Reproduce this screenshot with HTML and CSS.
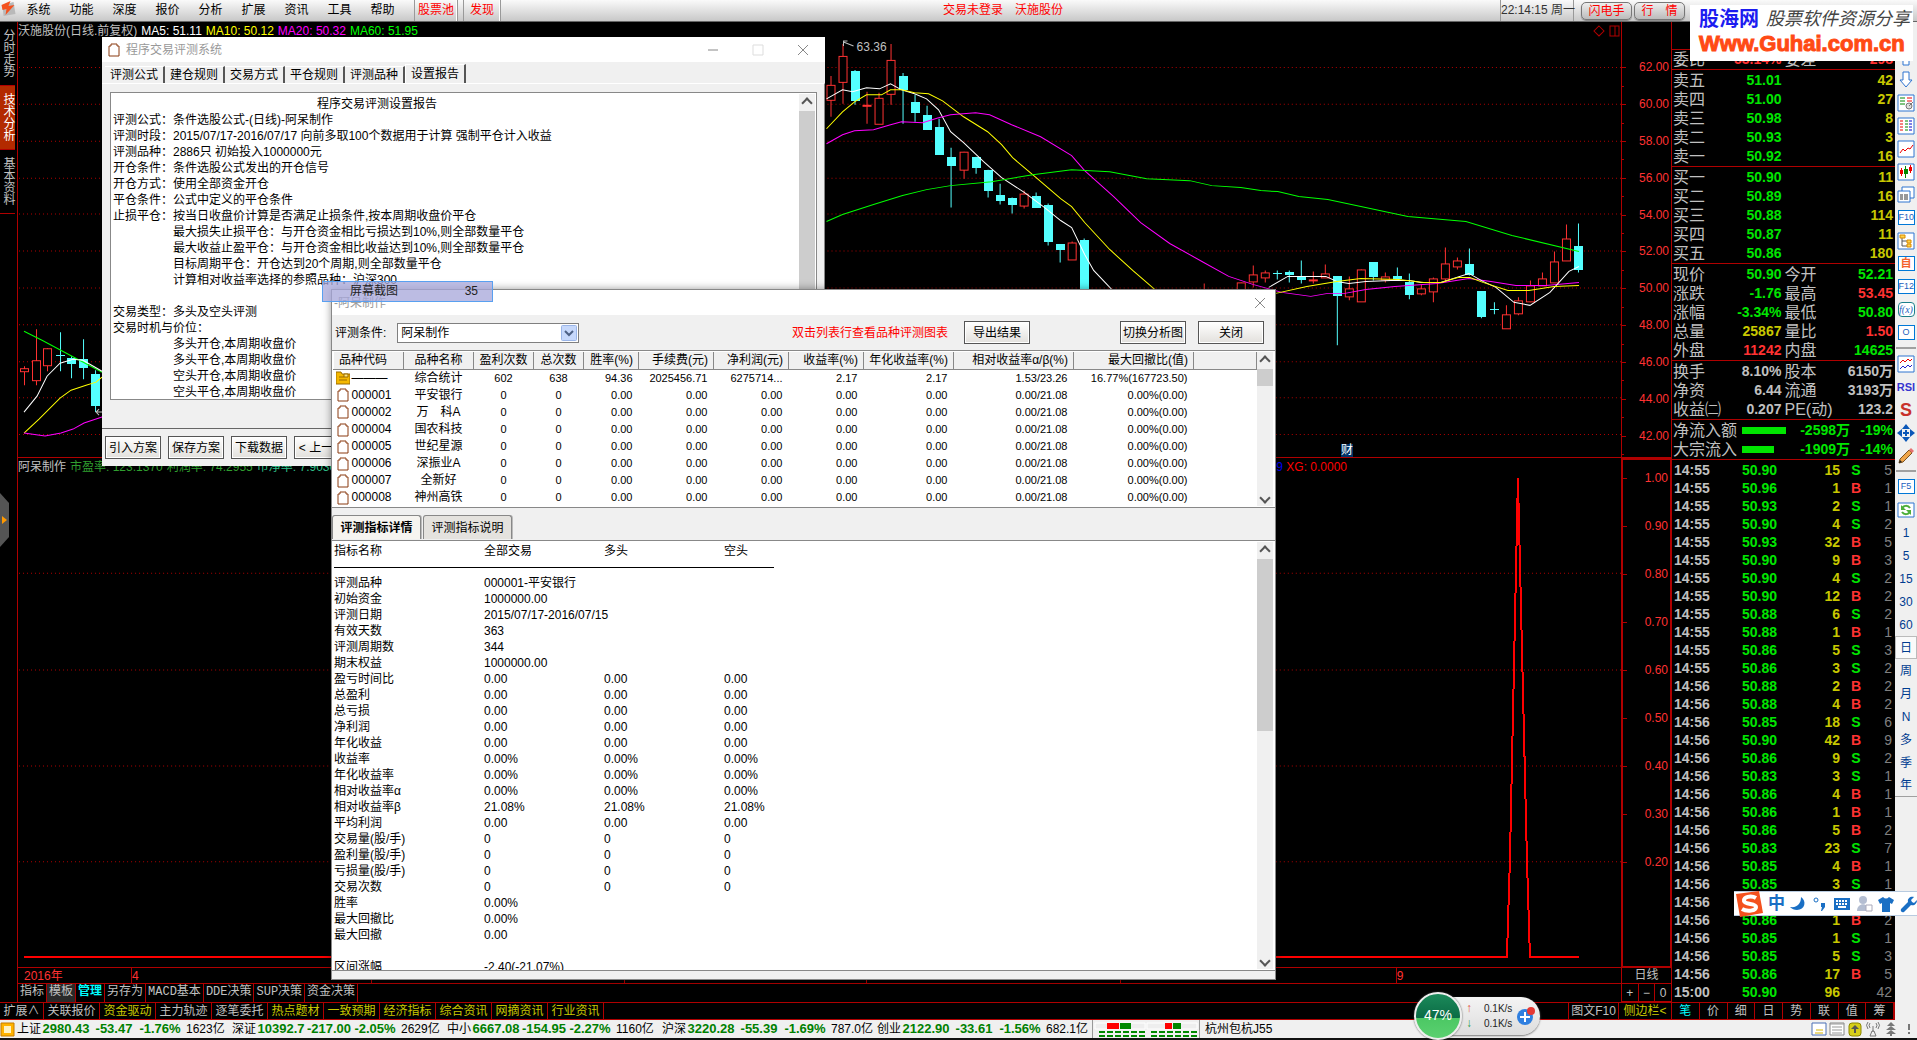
FILE: index.html
```html
<!DOCTYPE html>
<html lang="zh-CN">
<head>
    <meta charset="UTF-8">
    <meta name="viewport" content="width=device-width, initial-scale=1.0">
    <title>程序交易评测系统</title>
    <link rel="stylesheet" href="styles.css">
</head>
<body>
    <header class="menubar">
        <svg class="app-icon" viewBox="0 0 16 18"><path d="M2 5l11-3 2 12-12 2z" fill="#b9b9b9"/><path d="M1 5l9-4-2 5 6-1-9 10 1-6-4 1z" fill="#f4511e"/></svg>
        <nav class="menu">
            <a href="#">系统</a><a href="#">功能</a><a href="#">深度</a><a href="#">报价</a><a href="#">分析</a><a href="#">扩展</a><a href="#">资讯</a><a href="#">工具</a><a href="#">帮助</a>
        </nav>
        <a class="menu-hot" href="#">股票池</a>
        <a class="menu-hot" href="#">发现</a>
        <div class="login-state"><span>交易未登录</span><span>沃施股份</span></div>
        <div class="clock">22:14:15 周一</div>
        <button class="pill-btn">闪电手</button>
        <button class="pill-btn">行　情</button>
    </header>

    <main class="workspace">
        <div class="left">
            <div class="stage">
                <nav class="side-tabs">
                    <a href="#">分时走势</a>
                    <a href="#" class="active">技术分析</a>
                    <a href="#">基本资料</a>
                </nav>
                <div class="charts">
                    <section class="pane">
                        <div class="pane-title">
                            <span>沃施股份(日线.前复权)</span><span class="c-white">MA5: 51.11</span><span class="c-ma10">MA10: 50.12</span><span class="c-ma20">MA20: 50.32</span><span class="c-ma60">MA60: 51.95</span>
                        </div>
                        <svg class="plot" viewBox="18 22 1602 436" preserveAspectRatio="none">
                            <g id="gridTop" class="grid-line"></g>
                            <g id="candles"></g>
                            <g class="ma">
                                <polyline class="s-ma60" points="24,332 42,341 102,373"/>
                                <polyline class="s-ma5" points="24,413 37,397 47,377 60,364 73,360 83,361 102,372"/>
                                <polyline class="s-ma10" points="24,434 39,420 60,399 71,391 86,386 96,383 102,378"/>
                                <polyline class="s-ma20" points="24,434 45,437 61,434 73,430 84,424 102,418"/>
                                <polyline class="s-ma5" points="826,99 842,90 852,92 866,88 879,89 890,84 901,90 914,94 926,99 938,110 950,132 963,143 983,162 1001,178 1024,193 1044,208 1060,221 1071,228 1084,255 1093,271 1111,290"/>
                                <polyline class="s-ma10" points="826,129 842,112 854,102 866,95 881,95 890,90 901,90 914,93 928,94 942,101 963,117 987,132 1001,145 1012,158 1032,175 1060,199 1071,207 1084,223 1109,250 1132,271 1154,290"/>
                                <polyline class="s-ma20" points="826,144 842,135 854,131 873,130 890,125 901,122 922,123 938,118 950,115 975,113 989,115 1011,125 1040,137 1071,156 1084,171 1113,197 1140,223 1169,244 1203,263 1228,277 1252,285 1281,293 1310,297 1327,294 1344,294 1365,290 1394,287 1436,284 1468,279 1490,282 1515,286 1545,286 1578,283"/>
                                <polyline class="s-ma60" points="826,222 842,215 873,205 902,196 926,190 950,186 991,182 1032,175 1071,170 1109,172 1146,179 1189,181 1211,186 1240,188 1260,191 1277,192 1298,197 1327,200 1360,207 1407,217 1465,222 1511,236 1578,252"/>
                                <polyline class="s-ma5" points="1268,288 1287,277 1325,277 1336,282 1348,284 1365,282 1390,281 1409,281 1420,283 1440,283 1468,274 1482,282 1495,288 1513,303 1529,306 1549,293 1568,272 1578,267"/>
                                <polyline class="s-ma10" points="1275,294 1306,287 1336,282 1360,279 1398,280 1423,283 1440,283 1457,278 1469,278 1482,283 1507,291 1528,291 1553,287 1578,286"/>
                            </g>
                            <path class="mark" d="M853,46 L843,42 M847,41 h-4 v5 M102,413 h-5 M99,410 l-3,3 3,3"/>
                            <path class="mark-red" d="M1598,26 l5,5 -5,5 -5,-5z M1609,26 h9 v10 h-9z M1614,26 v10"/>
                        </svg>
                        <span class="peak">63.36</span>
                        <span class="news">财</span>
                    </section>
                    <div class="axis axis-top">
                        <span>62.00</span><span>60.00</span><span>58.00</span><span>56.00</span><span>54.00</span><span>52.00</span><span>50.00</span><span>48.00</span><span>46.00</span><span>44.00</span><span>42.00</span>
                    </div>
                    <section class="pane pane-lower">
                        <div class="pane-title">
                            <span>阿呆制作</span><span class="c-pe">市盈率: 123.1370</span><span class="c-pe">利润率: 74.2955</span><span class="c-pb">市净率: 7.9030</span><span class="xg"><b>9</b> XG: 0.0000</span>
                        </div>
                        <svg class="plot" viewBox="18 458 1602 510" preserveAspectRatio="none">
                            <g id="gridLow" class="grid-line"></g>
                            <polyline class="signal" points="24,958 1506,958 1509,860 1517,478 1526,860 1529,958 1578,958"/>
                        </svg>
                    </section>
                    <div class="axis axis-low">
                        <span>1.00</span><span>0.90</span><span>0.80</span><span>0.70</span><span>0.60</span><span>0.50</span><span>0.40</span><span>0.30</span><span>0.20</span>
                    </div>
                    <div class="months">
                        <span>2016年</span><span>4</span><span>5</span><span>6</span><span>7</span><span>8</span><span>9</span>
                    </div>
                    <div class="period">日线</div>
                    <nav class="indicator-tabs">
                        <a href="#">指标</a><a href="#" class="pressed">模板</a><a href="#" class="active">管理</a><a href="#">另存为</a><a href="#">MACD基本</a><a href="#">DDE决策</a><a href="#">SUP决策</a><a href="#">资金决策</a>
                    </nav>
                    <div class="zoom-keys"><button>+</button><button>−</button><button>0</button></div>
                </div>
            </div>
            <nav class="ext-tabs">
                <a href="#" class="first">扩展∧</a><a href="#">关联报价</a><a href="#" class="y">资金驱动</a><a href="#">主力轨迹</a><a href="#">逐笔委托</a><a href="#" class="y">热点题材</a><a href="#" class="y">一致预期</a><a href="#" class="y">经济指标</a><a href="#" class="y">综合资讯</a><a href="#" class="y">网摘资讯</a><a href="#" class="y">行业资讯</a>
                <a href="#" class="f10">图文F10</a><a href="#" class="y fold">侧边栏&lt;</a>
            </nav>
        </div>

        <aside class="quote">
            <div class="quote-head"></div>
            <div id="quote"></div>
            <table class="ticks"><tbody id="ticks"></tbody></table>
            <nav class="quote-tabs">
                <a href="#" class="active">笔</a><a href="#">价</a><a href="#">细</a><a href="#">日</a><a href="#">势</a><a href="#">联</a><a href="#">值</a><a href="#">筹</a>
            </nav>
        </aside>

        <nav class="tools">
            <button aria-label="上"><svg viewBox="0 0 18 18"><path d="M9 2l6 7h-3v8H6V9H3z" fill="#fff" stroke="#2f74d0"/></svg></button>
            <button aria-label="下"><svg viewBox="0 0 18 18"><path d="M6 1h6v8h3l-6 7-6-7h3z" fill="#fff" stroke="#2f74d0"/></svg></button>
            <button aria-label="报价设置"><svg viewBox="0 0 18 18"><path class="frame" d="M1 1h16v16H1z"/><path d="M3 4h5M3 7h5M3 10h5" stroke="#080"/><path d="M10 4h5M10 7h5" stroke="#e00"/><circle cx="12" cy="12" r="3" fill="#ddd" stroke="#777"/><path d="M12 12l4-4" stroke="#777"/></svg></button>
            <button aria-label="报价列表"><svg viewBox="0 0 18 18"><path class="frame" d="M1 1h16v16H1z"/><path d="M3 4h3M3 7h3M3 10h3M3 13h3" stroke="#e00"/><path d="M8 4h3M8 7h3M8 10h3M8 13h3" stroke="#080"/><path d="M12 4h3M12 7h3M12 10h3M12 13h3" stroke="#00c"/></svg></button>
            <button aria-label="分时图"><svg viewBox="0 0 18 18"><path class="frame" d="M1 1h16v16H1z"/><path d="M3 13l3-4 2 2 3-3 2 1 3-4" fill="none" stroke="#e00"/></svg></button>
            <button aria-label="K线图"><svg viewBox="0 0 18 18"><path class="frame" d="M1 1h16v16H1z"/><path d="M3 7h3v4H3zM12 4h3v4h-3zM4 5h1v8H4zM13 2h1v8h-1z" fill="#e00"/><path d="M7 6h4v5H7zM8 3h1v12H8z" fill="#080"/></svg></button>
            <button aria-label="多窗口"><svg viewBox="0 0 18 18"><path class="frame" d="M5 1h12v11H5z"/><path class="frame" d="M1 5h12v11H1z"/><path d="M3 9h3M7 9h4M3 11h3M7 11h4M3 13h3M7 13h4" stroke="#333"/></svg></button>
            <button><span class="boxed">F10</span></button>
            <button aria-label="板块树"><svg viewBox="0 0 18 18"><path class="frame" d="M1 1h16v16H1z"/><path d="M5 6v8h5M5 9h5" fill="none" stroke="#555"/><path d="M3 3h5v3H3zM10 8h4v3h-4zM10 12h4v3h-4z" fill="#ffd54a" stroke="#d98a00"/></svg></button>
            <button><span class="boxed boxed-own">自</span></button>
            <button><span class="boxed">F12</span></button>
            <button><span class="boxed boxed-fx">f(x)</span></button>
            <button><span class="boxed">O</span></button>
            <hr>
            <button aria-label="叠加"><svg viewBox="0 0 18 18"><path class="frame" d="M1 1h16v16H1z"/><path d="M3 8l3-3 2 2 3-3 2 2 2-2" fill="none" stroke="#e00"/><path d="M3 14l3-3 2 2 3-3 2 2 2-2" fill="none" stroke="#22c"/></svg></button>
            <button class="rsi">RSI</button>
            <button class="money">S</button>
            <button aria-label="移动"><svg viewBox="0 0 18 18"><path d="M9 0l4 5H5zM9 18l4-5H5zM0 9l5-4v8zM18 9l-5-4v8zM8 6h2v6H8zM6 8h6v2H6z" fill="#0b57b8"/></svg></button>
            <button aria-label="画线"><svg viewBox="0 0 18 18"><path d="M2 16l1-4L12 3l3 3-9 9z" fill="#f0a64a" stroke="#7a5220"/><path d="M12 3l2-2 3 3-2 2z" fill="#e57373"/><path d="M2 16l1-3 2 2z" fill="#222"/></svg></button>
            <hr>
            <button><span class="boxed">F5</span></button>
            <button aria-label="刷新"><svg viewBox="0 0 18 18"><path class="frame" d="M1 2h16v14H1z"/><path d="M5 8c1-4 6-4 8-1M13 10c-1 4-6 4-8 1" fill="none" stroke="#4cae3a" stroke-width="2"/><path d="M4 4v5h5zM14 14V9H9z" fill="#4cae3a"/></svg></button>
            <button>1</button><button>5</button><button>15</button><button>30</button><button>60</button>
            <button class="on">日</button><button>周</button><button>月</button><button>N</button><button>多</button><button>季</button><button class="last">年</button>
        </nav>
    </main>

    <footer class="status">
        <svg class="home" viewBox="0 0 15 15"><path d="M1 1h13v13H1z" fill="#ffb300" stroke="#c67c00"/><path d="M4 4h7v7H4z" fill="#fff3c4"/></svg>
        <div id="indices" class="indices"></div>
        <svg class="meter" viewBox="0 0 106 18">
            <path d="M2 3h50v6H2zM54 3h50v6H54z" fill="#eee" stroke="#fff"/>
            <path d="M14 3h12v6H14zM72 3h7v6h-7z" fill="#f00"/><path d="M27 3h11v6H27zM80 3h8v6h-8z" fill="#080"/>
            <path d="M6 12h46M6 16h46M58 12h46M58 16h46" stroke="#080" stroke-width="2" stroke-dasharray="6 2"/>
        </svg>
        <span class="server">杭州包杭J55</span>
        <div class="tray">
            <svg viewBox="0 0 16 16"><path d="M1 2h14v12H1z" fill="#fff" stroke="#4a6fb5"/><path d="M5 9h7M4 12h8" stroke="#d8b400"/></svg>
            <svg viewBox="0 0 16 16"><path d="M1 2h14v12H1z" fill="#fff" stroke="#888"/><path d="M1 3h14M3 6h10M3 9h10M3 12h10" stroke="#999"/></svg>
            <svg viewBox="0 0 16 16"><rect x="2" y="2" width="12" height="13" rx="3" fill="#d7cf1a" stroke="#8c8700"/><path d="M8 4l4 4H9v4H7V8H4z" fill="#555"/></svg>
            <svg viewBox="0 0 16 16"><path d="M8 5v6M5 15l2-5h2l2 5zM5 2q-2 2 0 5M11 2q2 2 0 5M3 1q-3 3 0 7M13 1q3 3 0 7" fill="none" stroke="#777"/></svg>
            <svg viewBox="0 0 16 16"><path d="M8 1l4 4H4zM8 5l5 4H3zM8 9l5 4H3zM7 12h2v3H7z" fill="#777"/></svg>
            <svg viewBox="0 0 16 16"><path d="M7 3h2v6H7zM7 11h2v2H7z" fill="#777"/></svg>
        </div>
    </footer>

    <svg class="side-handle" viewBox="0 0 10 54"><path d="M0 0l9 10v34L0 54z" fill="#555"/><path d="M2 23l5 4-5 4z" fill="#f90"/></svg>

    <section class="window win-setup">
        <header class="titlebar">
            <svg class="clip" viewBox="0 0 14 14"><path d="M2 3h2V1h6v2h2v10H2z" fill="#fff" stroke="#8a3a10"/></svg>
            <h1>程序交易评测系统</h1>
            <button class="sys" aria-label="最小化"><svg viewBox="0 0 12 12"><path d="M1 6h10"/></svg></button>
            <button class="sys sys-off" aria-label="最大化" disabled><svg viewBox="0 0 12 12"><path d="M1 1h10v10H1z"/></svg></button>
            <button class="sys" aria-label="关闭"><svg viewBox="0 0 12 12"><path d="M1 1l10 10M11 1L1 11"/></svg></button>
        </header>
        <div class="setup-tabs">
            <button>评测公式</button><button>建仓规则</button><button>交易方式</button><button>平仓规则</button><button>评测品种</button><button class="active">设置报告</button>
        </div>
        <div class="setup-page">
            <div class="report">
                <div class="report-text">
                    <h2>程序交易评测设置报告</h2>
                    <p>评测公式：条件选股公式-(日线)-阿呆制作</p>
                    <p>评测时段：2015/07/17-2016/07/17 向前多取100个数据用于计算 强制平仓计入收益</p>
                    <p>评测品种：2886只 初始投入1000000元</p>
                    <p>开仓条件：条件选股公式发出的开仓信号</p>
                    <p>开仓方式：使用全部资金开仓</p>
                    <p>平仓条件：公式中定义的平仓条件</p>
                    <p>止损平仓：按当日收盘价计算是否满足止损条件,按本周期收盘价平仓</p>
                    <p class="in">最大损失止损平仓：与开仓资金相比亏损达到10%,则全部数量平仓</p>
                    <p class="in">最大收益止盈平仓：与开仓资金相比收益达到10%,则全部数量平仓</p>
                    <p class="in">目标周期平仓：开仓达到20个周期,则全部数量平仓</p>
                    <p class="in">计算相对收益率选择的参照品种：沪深300</p>
                    <p>&nbsp;</p>
                    <p>交易类型：多头及空头评测</p>
                    <p>交易时机与价位：</p>
                    <p class="in">多头开仓,本周期收盘价</p>
                    <p class="in">多头平仓,本周期收盘价</p>
                    <p class="in">空头开仓,本周期收盘价</p>
                    <p class="in">空头平仓,本周期收盘价</p>
                </div>
                <div class="scroll"><i class="up"></i><b class="thumb"></b></div>
            </div>
        </div>
        <div class="setup-actions">
            <button class="btn">引入方案</button><button class="btn">保存方案</button><button class="btn">下载数据</button><button class="btn">&lt; 上一步</button>
        </div>
    </section>

    <section class="window win-result">
        <header class="titlebar">
            <h1>-阿呆制作</h1>
            <button class="sys" aria-label="关闭"><svg viewBox="0 0 12 12"><path d="M1 1l10 10M11 1L1 11"/></svg></button>
        </header>
        <div class="result-bar">
            <label for="cond">评测条件:</label>
            <select id="cond"><option>阿呆制作</option></select>
            <span class="hint">双击列表行查看品种评测图表</span>
            <button class="btn">导出结果</button>
            <button class="btn btn-switch">切换分析图</button>
            <button class="btn">关闭</button>
        </div>
        <div class="list">
            <table class="list-table">
                <colgroup><col class="w70"><col class="w70"><col class="w60"><col class="w50"><col class="w55"><col class="w75"><col class="w75"><col class="w75"><col class="w90"><col class="w120"><col class="w120"><col></colgroup>
                <thead>
                    <tr><th>品种代码</th><th>品种名称</th><th>盈利次数</th><th>总次数</th><th>胜率(%)</th><th>手续费(元)</th><th>净利润(元)</th><th>收益率(%)</th><th>年化收益率(%)</th><th>相对收益率α/β(%)</th><th>最大回撤比(值)</th><th></th></tr>
                </thead>
                <tbody id="stocks"></tbody>
            </table>
            <div class="scroll"><i class="up"></i><b class="thumb"></b><i class="down"></i></div>
        </div>
        <div class="detail-tabs"><button class="active">评测指标详情</button><button>评测指标说明</button></div>
        <div class="detail">
            <table class="detail-table">
                <colgroup><col class="w150"><col class="w120"><col class="w120"><col></colgroup>
                <thead>
                    <tr><th>指标名称</th><th>全部交易</th><th>多头</th><th>空头</th></tr>
                    <tr><td colspan="4"><hr></td></tr>
                </thead>
                <tbody id="metrics"></tbody>
            </table>
            <div class="scroll"><i class="up"></i><b class="thumb"></b><i class="down"></i></div>
        </div>
    </section>

    <div class="drag-tip"><span>屏幕截图</span><span>35</span></div>

    <div class="brand">
        <div class="brand-row"><strong>股海网</strong><em>股票软件资源分享</em></div>
        <div class="brand-url">Www.Guhai.com.cn</div>
    </div>

    <div class="ime">
        <svg class="ime-logo" viewBox="0 0 30 28"><path d="M2 4l23-3 4 22-23 4z" fill="#f4511e"/><path d="M22 8c-5-3-13-1-12 3s12 2 12 6-9 5-14 2" fill="none" stroke="#fff" stroke-width="4"/></svg>
        <b>中</b>
        <svg viewBox="0 0 18 18"><path d="M12 2c6 4 4 13-4 13-3 0-5-1-7-3 8 1 11-4 11-10z"/></svg>
        <svg viewBox="0 0 18 18"><circle cx="5" cy="5" r="2" fill="none" stroke="#1a6fc4"/><path d="M10 8h4v4l-3 4h-1l1-4h-1z"/></svg>
        <svg viewBox="0 0 18 18"><path d="M1 3h16v12H1z"/><path d="M3 6h12M3 9h12" stroke="#fff" stroke-width="2" stroke-dasharray="2 1"/><path d="M5 12h8" stroke="#fff" stroke-width="2"/></svg>
        <svg class="dim" viewBox="0 0 18 18"><circle cx="8" cy="5" r="4"/><path d="M2 16c0-9 12-9 12 0z"/><path d="M11 10h6v6h-6z" fill="#fff" stroke="#aab"/></svg>
        <svg viewBox="0 0 18 18"><path d="M6 2q3 3 6 0l5 3-2 4-2-1v9H5V8L3 9 1 5z"/></svg>
        <svg viewBox="0 0 18 18"><path d="M2 14l7-7c-1-4 3-6 6-5l-3 3 1 2 2 1 3-3c0 4-3 6-6 5l-7 7c-2 1-4-1-3-3z"/></svg>
    </div>

    <div class="netball">
        <div class="ball">47%</div>
        <div class="speeds"><span><i class="rise">↑</i>0.1K/s</span><span><i class="fall">↓</i>0.1K/s</span></div>
        <svg class="plus" viewBox="0 0 22 22"><circle cx="10" cy="12" r="8" fill="#2f7fe0"/><path d="M10 7v10M5 12h10" stroke="#fff" stroke-width="2"/><circle cx="16" cy="6" r="4" fill="#e53935"/></svg>
    </div>

    <script src="script.js"></script>
</body>
</html>
```
FILE: styles.css
```css
* {
    box-sizing: border-box;
}
body {
    margin: 0;
    height: 100vh;
    display: grid;
    grid-template-rows: 22px minmax(0, 1fr) 20px;
    grid-template-columns: minmax(0, 1fr);
    position: relative;
    overflow: hidden;
    background: #000;
    color: #c0c0c0;
    font: 12px/16px "Liberation Sans", "Noto Sans CJK SC", sans-serif;
    white-space: nowrap;
}
a {
    color: inherit;
    text-decoration: none;
}
button, select {
    font: inherit;
    color: inherit;
    margin: 0;
    padding: 0;
}
h1, h2, p {
    margin: 0;
    font-size: 12px;
    font-weight: normal;
}
table {
    border-collapse: collapse;
    border-spacing: 0;
}
td, th {
    padding: 0;
    font-weight: normal;
    text-align: left;
}

/* top menu */
.menubar {
    display: flex;
    align-items: stretch;
    padding-right: 231px;
    background: linear-gradient(#fafafa, #c8c8c8);
    border-bottom: 1px solid #666;
    color: #000;
    line-height: 20px;
}
.app-icon {
    width: 17px;
    height: 18px;
}
.menu {
    display: flex;
    margin-right: 10px;
}
.menu a {
    width: 43px;
    text-align: center;
}
.menu-hot {
    margin-right: 5px;
    padding: 0 3px;
    color: #f00;
    border-left: 1px solid #999;
    border-right: 1px solid #999;
    box-shadow: inset -1px 0 #fff;
}
.menu-hot + .menu-hot {
    padding: 0 6px;
}
.login-state {
    flex: 1;
    display: flex;
    justify-content: center;
    gap: 12px;
    color: #f00;
}
.clock {
    width: 74px;
    margin-right: 6px;
    border-left: 1px solid #999;
    border-right: 1px solid #999;
    text-align: center;
    color: #333;
}
.pill-btn {
    width: 51px;
    height: 18px;
    margin: 2px 1px 0;
    border: 1px solid #777;
    border-radius: 5px;
    background: linear-gradient(#eee, #bbb);
    box-shadow: 0 1px 1px #888;
    color: #f00;
    line-height: 15px;
}

/* main frame */
.workspace {
    display: flex;
    min-height: 0;
}
.left {
    flex: 1;
    min-width: 0;
    display: flex;
    flex-direction: column;
}
.stage {
    flex: 1;
    min-height: 0;
    display: flex;
}
.side-tabs {
    width: 18px;
    border-right: 1px solid #b00000;
}
.side-tabs a {
    display: block;
    height: 64px;
    padding: 7px 0 0;
    border-bottom: 1px solid #b00000;
    writing-mode: vertical-rl;
    line-height: 15px;
}
.side-tabs .active {
    background: #b32a00;
    color: #fff;
}
.charts {
    flex: 1;
    min-width: 0;
    display: grid;
    grid-template-columns: minmax(0, 1fr) 51px;
    grid-template-rows: minmax(0, 436fr) minmax(0, 510fr) 16px 18px;
}
.pane {
    display: grid;
    position: relative;
    border-bottom: 1px solid #b00000;
    min-height: 0;
}
.pane-title, .plot {
    grid-area: 1 / 1;
}
.pane-title {
    display: flex;
    gap: 4px;
    height: 18px;
    line-height: 18px;
}
.plot {
    width: 100%;
    height: 100%;
    min-height: 0;
    shape-rendering: crispEdges;
}
.c-white { color: #fff; }
.c-ma10 { color: #ff0; }
.c-ma20 { color: #f0f; }
.c-ma60 { color: #0f0; }
.c-pe { color: #2f9e2f; }
.c-pb { color: #2fc08a; }
.xg {
    margin-left: auto;
    margin-right: 274px;
    color: #f00;
}
.xg b {
    color: #00f;
    font-weight: normal;
}
.grid-line line {
    stroke: #b00000;
    stroke-dasharray: 1 3;
}
.ma polyline, .signal {
    fill: none;
}
.s-ma5 { stroke: #fff; }
.s-ma10 { stroke: #ff0; }
.s-ma20 { stroke: #f0f; }
.s-ma60 { stroke: #0f0; }
.signal {
    stroke: #f00;
    stroke-width: 2;
}
.mark {
    fill: none;
    stroke: #c0c0c0;
}
.mark-red {
    fill: none;
    stroke: #b00000;
}
.up-bar {
    fill: #000;
    stroke: #ff3232;
}
.up-wick { stroke: #ff3232; }
.down-bar { fill: #54ffff; }
.down-wick { stroke: #54ffff; }
.peak, .news {
    position: absolute;
}
.peak {
    left: 52%;
    top: 17px;
    margin-left: 5px;
}
.news {
    right: 268px;
    bottom: 0;
    line-height: 13px;
    background: #003366;
    color: #fff;
}
.axis {
    display: flex;
    flex-direction: column;
    border: 1px solid #b00000;
    border-top: 0;
    color: #ff3232;
    text-align: right;
}
.axis span {
    position: relative;
    padding-right: 2px;
}
.axis span::before, .axis-top span::after {
    content: "";
    position: absolute;
    left: 0;
    top: 50%;
    width: 4px;
    height: 1px;
    background: #b00000;
}
.axis-top {
    padding: 27px 0 3px;
}
.axis-top span {
    flex: 1;
    display: flex;
    align-items: center;
    justify-content: flex-end;
}
.axis-top span::after {
    top: 100%;
    width: 2px;
}
.axis-low {
    justify-content: space-between;
    padding: 10px 0 96px;
    border: 2px solid #b00000;
}
.months {
    display: grid;
    grid-template-columns: 113fr 240fr 253fr 241fr 254fr 276fr 225fr;
    color: #ff3232;
    line-height: 16px;
    border-bottom: 1px solid #b00000;
}
.months span + span {
    border-left: 1px solid #b00000;
}
.months span:first-child {
    padding-left: 6px;
}
.period, .zoom-keys {
    border: 1px solid #b00000;
    border-top: 0;
    text-align: center;
}
.period {
    line-height: 15px;
}
.indicator-tabs, .ext-tabs {
    display: flex;
    line-height: 17px;
}
.indicator-tabs a, .ext-tabs a {
    padding: 0 3px;
    border-right: 1px solid #b00000;
}
.indicator-tabs a {
    padding: 0 2px;
    font-family: "Liberation Mono", "Noto Sans CJK SC", monospace;
}
.indicator-tabs .pressed {
    background: #2a2a2a;
}
.indicator-tabs .active {
    color: #0ff;
    font-weight: bold;
}
.zoom-keys {
    display: flex;
}
.zoom-keys button {
    flex: 1;
    background: none;
    border: 0;
}
.zoom-keys button + button {
    border-left: 1px solid #b00000;
}
.ext-tabs {
    height: 18px;
    border-top: 1px solid #b00000;
    border-bottom: 1px solid #b00000;
    line-height: 16px;
}
.ext-tabs a {
    width: 56px;
    text-align: center;
}
.ext-tabs .first {
    width: 44px;
}
.ext-tabs .y {
    color: #c8c800;
}
.ext-tabs .f10 {
    width: 51px;
    margin-left: auto;
    padding: 0;
    border-left: 1px solid #b00000;
}
.ext-tabs .fold {
    width: 53px;
    padding: 0;
}

/* quote column */
.quote {
    width: 223px;
    display: flex;
    flex-direction: column;
}
.quote-head {
    height: 28px;
    border-bottom: 1px solid #b00000;
}
.quote-table {
    width: 100%;
    table-layout: fixed;
    border-bottom: 1px solid #b00000;
    margin-bottom: 1px;
}
.quote-table td {
    height: 19px;
    line-height: 19px;
    font-size: 16px;
    padding: 0 2px 0 1px;
}
.quote-table td.num {
    font-size: 14px;
    font-weight: bold;
    text-align: right;
}
.q-label { width: 50px; }
.q-value { width: 61px; }
.q-flow { width: 69px; }
.green { color: #00e600; }
.yellow { color: #c8c800; }
.red { color: #ff3232; }
.grey { color: #808080; }
.flow-bar {
    height: 7px;
    background: #00e600;
}
.ticks {
    width: 100%;
    table-layout: fixed;
}
.ticks td {
    height: 18px;
    line-height: 18px;
    font-size: 14px;
    font-weight: bold;
    text-align: right;
}
.ticks td:nth-child(1) {
    width: 45px;
    padding-left: 2px;
    text-align: left;
}
.ticks td:nth-child(2) { width: 60px; }
.ticks td:nth-child(3) { width: 63px; }
.ticks td:nth-child(4) {
    width: 32px;
    text-align: center;
}
.ticks td:nth-child(5) {
    padding-right: 3px;
    font-weight: normal;
}
.quote-tabs {
    display: flex;
    margin-top: auto;
    height: 18px;
    border: 1px solid #b00000;
    border-left: 0;
    text-align: center;
}
.quote-tabs a {
    flex: 1;
    border-right: 1px solid #b00000;
}
.quote-tabs .active {
    color: #0ff;
}

/* right tool strip */
.tools {
    display: flex;
    flex-direction: column;
    width: 22px;
    padding-top: 23px;
    background: #f0f0f0;
    color: #003c90;
}
.tools button {
    flex: none;
    display: flex;
    align-items: center;
    justify-content: center;
    width: 22px;
    height: 23px;
    border: 0;
    background: none;
}
.tools svg {
    width: 18px;
    height: 18px;
}
.tools .frame {
    fill: #fff;
    stroke: #2f74d0;
}
.tools hr {
    width: 20px;
    height: 2px;
    margin: 3px 1px;
    border: 0;
    background: #a0a0a0;
}
.boxed {
    width: 17px;
    height: 15px;
    border: 1px solid #0078d7;
    background: #fff;
    color: #1a5fc0;
    font-size: 9px;
    line-height: 13px;
    text-align: center;
}
.boxed-own {
    color: #f4622a;
    font-weight: bold;
    font-size: 11px;
}
.boxed-fx {
    font-family: "Liberation Serif", serif;
    font-style: italic;
    font-size: 10px;
    border-color: #1b7f8a;
    border-radius: 4px;
}
.tools .rsi {
    font-size: 11px;
    font-weight: bold;
    color: #3535d0;
}
.tools .money {
    font-size: 18px;
    font-weight: bold;
    color: #c8322b;
}
.tools .on {
    background: #fafafa;
    border: 1px solid #bbb;
}
.tools .last {
    border-bottom: 1px solid #a0a0a0;
}

/* status line */
.status {
    display: flex;
    align-items: center;
    background: #f0f0f0;
    border-bottom: 2px solid #111;
    color: #000;
    line-height: 18px;
}
.home {
    width: 15px;
    height: 15px;
    margin-right: 2px;
}
.indices {
    display: flex;
}
.index {
    display: flex;
    width: 215px;
}
.index b {
    color: #008000;
    font-size: 13px;
    text-align: center;
}
.index .name { width: 24px; }
.index .last { width: 50px; }
.index .diff { width: 46px; }
.index .pct { width: 46px; }
.index .amt { width: 49px; padding-left: 3px; }
.meter {
    width: 108px;
    height: 18px;
    border-left: 1px solid #999;
    border-right: 1px solid #999;
}
.server {
    padding-left: 5px;
}
.tray {
    display: flex;
    gap: 2px;
    margin-left: auto;
}
.tray svg {
    width: 16px;
    height: 16px;
}

/* floating windows */
.window {
    position: absolute;
    display: flex;
    flex-direction: column;
    background: #f0f0f0;
    color: #000;
}
.titlebar {
    display: flex;
    align-items: center;
    height: 25px;
    background: #fff;
    color: #999;
}
.titlebar h1 {
    flex: 1;
}
.clip {
    width: 14px;
    height: 14px;
    margin: 0 5px;
}
.sys {
    width: 45px;
    height: 25px;
    border: 0;
    background: none;
    line-height: 0;
}
.sys svg {
    width: 12px;
    height: 12px;
    fill: none;
    stroke: #888;
}
.sys-off svg {
    stroke: #ddd;
}
.btn {
    width: 66px;
    height: 23px;
    border: 1px solid #555;
    background: linear-gradient(#fff, #e2e0dc);
    box-shadow: inset 0 0 0 1px #fff;
}
.scroll {
    flex: none;
    display: flex;
    flex-direction: column;
    width: 16px;
    background: #f0f0f0;
}
.scroll i {
    height: 17px;
    display: grid;
    place-items: center;
}
.scroll i::before {
    content: "";
    width: 6px;
    height: 6px;
    border: solid #555;
    border-width: 2px 0 0 2px;
    transform: rotate(45deg);
}
.scroll .down {
    margin-top: auto;
}
.scroll .down::before {
    border-width: 0 2px 2px 0;
}
.thumb {
    background: #cdcdcd;
}

.win-setup {
    left: 102px;
    top: 37px;
    width: 723px;
    height: 429px;
}
.setup-tabs {
    display: flex;
    align-items: flex-end;
    height: 21px;
    padding-left: 3px;
}
.setup-tabs button {
    width: 60px;
    height: 17px;
    border: 0;
    border-right: 2px solid #555;
    border-top: 1px solid #fff;
    background: none;
    line-height: 15px;
}
.setup-tabs .active {
    height: 19px;
    width: 61px;
    border-left: 1px solid #fff;
}
.setup-page {
    flex: 1;
    min-height: 0;
    padding: 8px 7px 28px 8px;
    border-top: 1px solid #fff;
    border-right: 1px solid #888;
    border-bottom: 1px solid #666;
}
.report {
    display: flex;
    height: 100%;
    padding: 1px;
    border: 1px solid #888;
    background: #fff;
    overflow: hidden;
}
.report-text {
    flex: 1;
    padding: 2px 0 0 1px;
}
.report-text h2 {
    padding-left: 204px;
    line-height: 16px;
}
.report-text .in {
    padding-left: 60px;
}
.report .thumb {
    flex: 1;
}
.setup-actions {
    display: flex;
    gap: 7px;
    height: 37px;
    padding: 7px 3px;
}
.setup-actions .btn {
    width: 56px;
}

.win-result {
    left: 331px;
    top: 289px;
    width: 945px;
    height: 691px;
    border: 1px solid #888;
    box-shadow: 0 0 8px rgba(0, 0, 0, 0.4);
}
.win-result .titlebar {
    padding-left: 2px;
}
.win-result .sys {
    width: 30px;
}
.result-bar {
    display: flex;
    align-items: center;
    height: 35px;
    padding: 0 11px 0 3px;
}
.result-bar select {
    width: 182px;
    height: 20px;
    margin-left: 11px;
    padding-left: 3px;
    border: 1px solid #7f7f7f;
    border-radius: 0;
    appearance: none;
    background: #fff url("data:image/svg+xml,%3Csvg xmlns='http://www.w3.org/2000/svg' width='16' height='16'%3E%3Crect x='.5' y='.5' width='15' height='15' rx='1' fill='%23c6d8fb' stroke='%239ab5e8'/%3E%3Cpath d='M4 6l4 4 4-4' fill='none' stroke='%234d6185' stroke-width='2'/%3E%3C/svg%3E") no-repeat right 1px center;
}
.hint {
    margin: 0 16px 0 auto;
    color: #f00;
}
.btn-switch {
    margin: 0 12px 0 90px;
}
.list, .detail {
    display: flex;
    border-top: 1px solid #888;
    border-bottom: 1px solid #888;
    background: #fff;
    padding: 1px 2px 1px 1px;
}
.list {
    height: 158px;
}
.list-table, .detail-table {
    flex: 1;
    table-layout: fixed;
}
.list-table {
    width: 100%;
    height: 154px;
}
.list-table th {
    height: 17px;
    line-height: 15px;
    padding-right: 5px;
    text-align: right;
    background: #f0f0f0;
    border: 1px solid #888;
    border-left-color: #fff;
    border-top: 0;
}
.list-table th:nth-child(-n+4), .list-table td:nth-child(n+2):nth-child(-n+4) {
    text-align: center;
    padding: 0;
}
.list-table th:first-child {
    text-align: left;
    padding-left: 5px;
}
.list-table td {
    height: 17px;
    line-height: 17px;
    padding-right: 6px;
    text-align: right;
    font-size: 11px;
}
.list-table td:first-child, .list-table td:nth-child(2) {
    font-size: 12px;
}
.list-table td:first-child {
    text-align: left;
}
.list-table td svg {
    width: 14px;
    height: 14px;
    margin: 0 2px;
    vertical-align: middle;
}
.w50 { width: 50px; }
.w55 { width: 55px; }
.w60 { width: 60px; }
.w70 { width: 70px; }
.w75 { width: 75px; }
.w90 { width: 90px; }
.w120 { width: 120px; }
.w150 { width: 150px; }
.list .thumb {
    height: 17px;
}
.detail-tabs {
    display: flex;
    gap: 2px;
    padding-top: 7px;
    height: 32px;
}
.detail-tabs button {
    width: 89px;
    height: 24px;
    border: 1px solid #888;
    border-bottom: 0;
    border-radius: 3px 3px 0 0;
    background: #e4e2de;
    box-shadow: 1px 0 #bbb;
}
.detail-tabs .active {
    background: #f6f4f0;
    font-weight: bold;
}
.detail {
    flex: 1;
    min-height: 0;
    margin-bottom: 8px;
    overflow: hidden;
    justify-content: space-between;
}
.detail-table {
    flex: none;
    width: 440px;
    align-self: flex-start;
    margin: 1px;
}
.detail-table th, .detail-table td {
    height: 16px;
    line-height: 16px;
}
.detail-table hr {
    height: 1px;
    margin: 0;
    border: 0;
    background: #000;
}
.detail .thumb {
    height: 172px;
}

/* overlays */
.side-handle, .drag-tip, .brand, .ime, .netball {
    position: absolute;
}
.side-handle {
    left: 0;
    top: 493px;
    width: 10px;
    height: 54px;
}
.drag-tip {
    left: 322px;
    top: 281px;
    width: 171px;
    height: 21px;
    display: flex;
    justify-content: space-between;
    padding: 1px 14px 0 27px;
    border: 1px solid #59a0f0;
    background: rgba(165, 165, 217, 0.75);
    color: #222;
}
.brand {
    right: 4px;
    top: 5px;
    width: 223px;
    height: 56px;
    padding: 2px 3px 2px 9px;
    background: #fff;
}
.brand-row {
    display: flex;
    justify-content: space-between;
    line-height: 25px;
}
.brand strong {
    font-size: 20px;
    color: #1c1cf0;
}
.brand em {
    font-size: 18px;
    color: #444;
}
.brand-url {
    font-size: 22px;
    line-height: 24px;
    font-weight: bold;
    color: #ff4a14;
    -webkit-text-stroke: 1px #ff4a14;
}
.ime {
    right: 0;
    top: 891px;
    display: flex;
    align-items: center;
    gap: 4px;
    width: 183px;
    height: 25px;
    border: 1px solid #b8cbe0;
    border-width: 1px 0;
    background: #fff;
    color: #1a6fc4;
    font-size: 17px;
}
.ime svg {
    width: 18px;
    height: 18px;
    fill: #1a6fc4;
}
.ime .ime-logo {
    width: 30px;
    height: 28px;
}
.ime .dim {
    fill: #b4bed2;
}
.netball {
    right: 377px;
    bottom: 5px;
    display: flex;
    align-items: center;
    width: 102px;
    height: 38px;
    padding-left: 28px;
    border-radius: 0 19px 19px 0;
    background: linear-gradient(#f4f4f4, #ddd);
    box-shadow: 0 1px 2px #777;
    color: #222;
}
.ball {
    position: absolute;
    left: -24px;
    top: -5px;
    width: 48px;
    height: 48px;
    border: 2px solid #eee;
    border-radius: 50%;
    background: linear-gradient(#1b8a5a, #0b6b45 55%, #4cc864 55%, #5ad070);
    box-shadow: 0 0 2px #444;
    color: #fff;
    font-size: 14px;
    line-height: 42px;
    text-align: center;
}
.speeds {
    display: grid;
    font-size: 10px;
    line-height: 15px;
}
.speeds i {
    display: inline-block;
    width: 18px;
    font-size: 12px;
    font-style: normal;
    font-weight: bold;
}
.rise { color: #e2553f; }
.fall { color: #2e9e50; }
.plus {
    width: 22px;
    height: 22px;
    margin-left: auto;
    margin-right: 3px;
}
```
FILE: script.js
```js
const SVG = 'http://www.w3.org/2000/svg';

function add(parent, tag, attrs) {
    const el = document.createElementNS(SVG, tag);
    for (const k in attrs) el.setAttribute(k, attrs[k]);
    parent.appendChild(el);
}

// dotted grid
[67, 104, 141, 178, 214, 251, 288, 325, 362, 398, 435].forEach(y => {
    add(document.getElementById('gridTop'), 'line', { x1: 19, x2: 1620, y1: y + 0.5, y2: y + 0.5 });
});
[573, 670, 766, 862].forEach(y => {
    add(document.getElementById('gridLow'), 'line', { x1: 19, x2: 1620, y1: y + 0.5, y2: y + 0.5 });
});

// x, body top, body bottom, high, low, direction (1 up, 0 down)
const candles = [
    [24, 369, 372, 367, 386, 1], [36, 361, 381, 330, 386, 1], [47, 349, 366, 349, 372, 1],
    [60, 356, 357, 333, 372, 0], [71, 359, 365, 357, 379, 0], [83, 360, 369, 340, 380, 0],
    [95, 375, 407, 371, 413, 0],
    [830, 85, 100, 76, 117, 1], [842, 56, 82, 44, 104, 1], [854, 71, 101, 70, 105, 0],
    [866, 105, 106, 92, 124, 1], [878, 98, 124, 93, 124, 1], [890, 60, 94, 44, 105, 1],
    [902, 76, 90, 73, 124, 0], [914, 102, 113, 95, 122, 0], [926, 115, 130, 106, 130, 0],
    [938, 127, 155, 119, 155, 0], [950, 157, 166, 148, 208, 0], [963, 152, 170, 152, 179, 1],
    [975, 157, 168, 157, 174, 0], [987, 170, 191, 170, 198, 0], [999, 195, 201, 184, 205, 0],
    [1011, 198, 205, 198, 214, 0], [1023, 194, 206, 191, 209, 1], [1035, 196, 208, 193, 208, 0],
    [1047, 205, 243, 204, 246, 0], [1059, 245, 251, 245, 263, 0], [1071, 243, 260, 242, 260, 1],
    [1083, 240, 300, 239, 300, 0], [1203, 295, 310, 284, 310, 1], [1240, 283, 296, 283, 296, 1],
    [1252, 275, 282, 266, 288, 1], [1264, 273, 278, 271, 283, 1], [1276, 274, 275, 271, 280, 0],
    [1288, 273, 276, 271, 283, 0], [1300, 278, 281, 261, 284, 0], [1312, 280, 281, 272, 284, 1],
    [1324, 274, 278, 265, 278, 1], [1336, 277, 297, 277, 346, 0], [1348, 289, 297, 277, 301, 1],
    [1360, 270, 302, 270, 302, 1], [1372, 263, 278, 263, 281, 0], [1384, 277, 280, 273, 283, 1],
    [1396, 277, 280, 268, 280, 0], [1408, 283, 296, 274, 300, 0], [1420, 289, 294, 285, 296, 1],
    [1432, 279, 292, 278, 303, 1], [1444, 264, 279, 248, 282, 1], [1456, 261, 267, 258, 270, 1],
    [1468, 265, 276, 249, 276, 0], [1480, 292, 318, 292, 319, 0], [1493, 310, 311, 303, 315, 0],
    [1505, 315, 329, 306, 329, 1], [1517, 301, 314, 298, 316, 1], [1529, 286, 302, 281, 303, 1],
    [1541, 279, 286, 273, 286, 1], [1553, 262, 283, 252, 283, 1], [1565, 239, 261, 225, 261, 1],
    [1577, 247, 271, 224, 273, 0]
];
const layer = document.getElementById('candles');
candles.forEach(([x, top, bottom, high, low, up]) => {
    const kind = up ? 'up' : 'down';
    add(layer, 'line', { class: kind + '-wick', x1: x + 0.5, x2: x + 0.5, y1: high, y2: low });
    if (up) {
        add(layer, 'rect', { class: 'up-bar', x: x - 3.5, y: top + 0.5, width: 8, height: bottom - top });
    } else {
        add(layer, 'rect', { class: 'down-bar', x: x - 4, y: top, width: 9, height: bottom - top });
    }
});

// five-level quote and figures
const depth = [
    [['委比', '53.14%', 'red', '委差', '298', 'red']],
    [['卖五', '51.01', 'green', '', '42', 'yellow'], ['卖四', '51.00', 'green', '', '27', 'yellow'],
     ['卖三', '50.98', 'green', '', '8', 'yellow'], ['卖二', '50.93', 'green', '', '3', 'yellow'],
     ['卖一', '50.92', 'green', '', '16', 'yellow']],
    [['买一', '50.90', 'green', '', '11', 'yellow'], ['买二', '50.89', 'green', '', '16', 'yellow'],
     ['买三', '50.88', 'green', '', '114', 'yellow'], ['买四', '50.87', 'green', '', '11', 'yellow'],
     ['买五', '50.86', 'green', '', '180', 'yellow']],
    [['现价', '50.90', 'green', '今开', '52.21', 'green'], ['涨跌', '-1.76', 'green', '最高', '53.45', 'red'],
     ['涨幅', '-3.34%', 'green', '最低', '50.80', 'green'], ['总量', '25867', 'yellow', '量比', '1.50', 'red'],
     ['外盘', '11242', 'red', '内盘', '14625', 'green']],
    [['换手', '8.10%', '', '股本', '6150万', ''], ['净资', '6.44', '', '流通', '3193万', ''],
     ['收益㈡', '0.207', '', 'PE(动)', '123.2', '']]
];
let html = depth.map(rows => '<table class="quote-table">' + rows.map(r =>
    `<tr><td class="q-label">${r[0]}</td><td class="q-value num ${r[2]}">${r[1]}</td>` +
    `<td class="q-label">${r[3]}</td><td class="q-value num ${r[5]}">${r[4]}</td></tr>`).join('') + '</table>').join('');
html += '<table class="quote-table">' + [['净流入额', '-2598万', '-19%', 44], ['大宗流入', '-1909万', '-14%', 32]].map(r =>
    `<tr><td class="q-flow">${r[0]}</td><td class="q-label"><div class="flow-bar" style="width:${r[3]}px"></div></td>` +
    `<td class="q-value num green">${r[1]}</td><td class="num green">${r[2]}</td></tr>`).join('') + '</table>';
document.getElementById('quote').innerHTML = html;

const ticks = `14:55 50.90 15 S 5|14:55 50.96 1 B 1|14:55 50.93 2 S 1|14:55 50.90 4 S 2|14:55 50.93 32 B 5
|14:55 50.90 9 B 3|14:55 50.90 4 S 2|14:55 50.90 12 B 2|14:55 50.88 6 S 2|14:55 50.88 1 B 1
|14:55 50.86 5 S 3|14:55 50.86 3 S 2|14:56 50.88 2 B 2|14:56 50.88 4 B 2|14:56 50.85 18 S 6
|14:56 50.90 42 B 9|14:56 50.86 9 S 2|14:56 50.83 3 S 1|14:56 50.86 4 B 1|14:56 50.86 1 B 1
|14:56 50.86 5 B 2|14:56 50.83 23 S 7|14:56 50.85 4 B 1|14:56 50.85 3 S 1|14:56 50.85 2 S 1
|14:56 50.86 1 B 2|14:56 50.85 1 S 1|14:56 50.85 5 S 3|14:56 50.86 17 B 5|15:00 50.90 96 - 42`;
document.getElementById('ticks').innerHTML = ticks.split('|').map(line => {
    const [time, price, vol, side, count] = line.trim().split(' ');
    return `<tr><td>${time}</td><td class="green">${price}</td><td class="yellow">${vol}</td>` +
        `<td class="${side === 'B' ? 'red' : 'green'}">${side === '-' ? '' : side}</td><td class="grey">${count}</td></tr>`;
}).join('');

// index strip
document.getElementById('indices').innerHTML = [
    ['上证', '2980.43', '-53.47', '-1.76%', '1623亿'],
    ['深证', '10392.7', '-217.00', '-2.05%', '2629亿'],
    ['中小', '6667.08', '-154.95', '-2.27%', '1160亿'],
    ['沪深', '3220.28', '-55.39', '-1.69%', '787.0亿'],
    ['创业', '2122.90', '-33.61', '-1.56%', '682.1亿']
].map(r => `<div class="index"><span class="name">${r[0]}</span><b class="last">${r[1]}</b>` +
    `<b class="diff">${r[2]}</b><b class="pct">${r[3]}</b><span class="amt">${r[4]}</span></div>`).join('');

// result list
const folder = '<svg viewBox="0 0 14 14"><path d="M0 1h5l1 2h8v10H0z" fill="#f5b800" stroke="#9a6a00"/><path d="M3 6h5M3 9h8M8 3h4v3H8z" fill="#ffe680" stroke="#9a6a00"/></svg>';
const page = '<svg viewBox="0 0 14 14"><path d="M2 3h2V1h6v2h2v10H2z" fill="#fff" stroke="#8a3a10"/></svg>';
const stocks = [['000001', '平安银行'], ['000002', '万　科A'], ['000004', '国农科技'], ['000005', '世纪星源'],
    ['000006', '深振业A'], ['000007', '全新好'], ['000008', '神州高铁']];
const cells = list => list.map(c => `<td>${c}</td>`).join('');
document.getElementById('stocks').innerHTML =
    '<tr>' + cells([folder + '———', '综合统计', '602', '638', '94.36', '2025456.71', '6275714...', '2.17', '2.17', '1.53/23.26', '16.77%(167723.50)', '']) + '</tr>' +
    stocks.map(s => '<tr>' + cells([page + s[0], s[1], '0', '0', '0.00', '0.00', '0.00', '0.00', '0.00', '0.00/21.08', '0.00%(0.00)', '']) + '</tr>').join('');

const three = v => [v, v, v];
document.getElementById('metrics').innerHTML = [
    ['评测品种', '000001-平安银行'], ['初始资金', '1000000.00'], ['评测日期', '2015/07/17-2016/07/15'],
    ['有效天数', '363'], ['评测周期数', '344'], ['期末权益', '1000000.00'],
    ['盈亏时间比', ...three('0.00')], ['总盈利', ...three('0.00')], ['总亏损', ...three('0.00')],
    ['净利润', ...three('0.00')], ['年化收益', ...three('0.00')], ['收益率', ...three('0.00%')],
    ['年化收益率', ...three('0.00%')], ['相对收益率α', ...three('0.00%')], ['相对收益率β', ...three('21.08%')],
    ['平均利润', ...three('0.00')], ['交易量(股/手)', ...three('0')], ['盈利量(股/手)', ...three('0')],
    ['亏损量(股/手)', ...three('0')], ['交易次数', ...three('0')], ['胜率', '0.00%'],
    ['最大回撤比', '0.00%'], ['最大回撤', '0.00'], ['&nbsp;'], ['区间涨幅', '-2.40(-21.07%)']
].map(r => '<tr>' + cells(r) + '</tr>').join('');
```
